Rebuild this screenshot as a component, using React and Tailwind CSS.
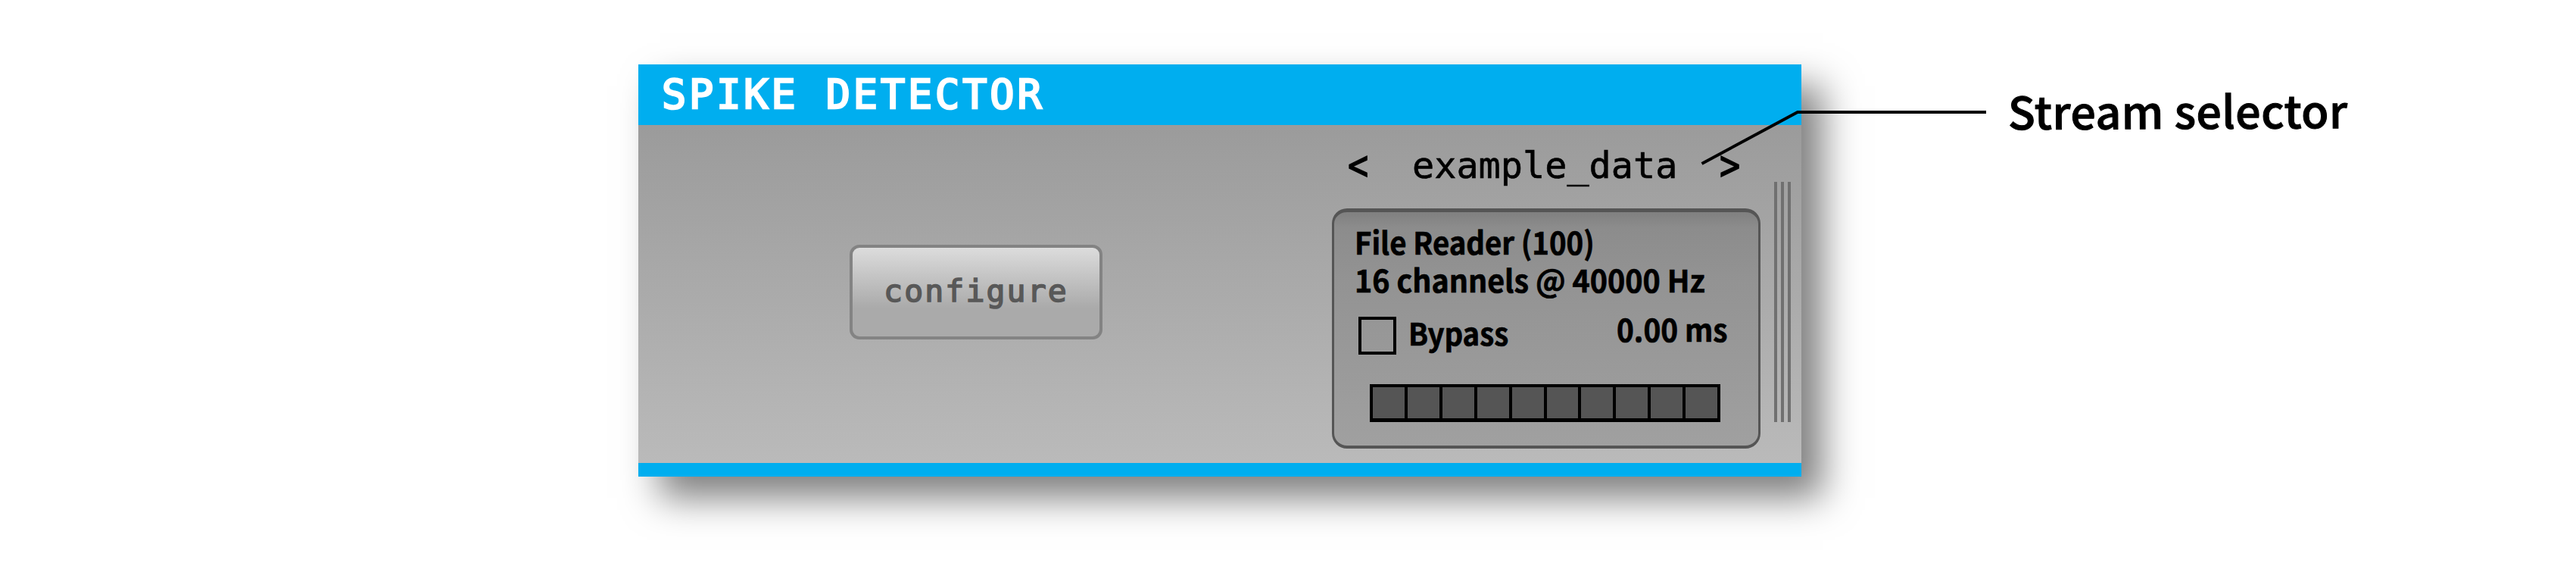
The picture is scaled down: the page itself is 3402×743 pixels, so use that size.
import React from "react";

function Meter() {
  return (
    <div className="ml-[15px] mt-[38px] flex h-[50px] w-[463px] gap-1 border-4 border-b-[5px] border-black bg-black">
      {Array.from({ length: 10 }, (_, i) => (
        <div key={i} className="flex-1 bg-[#555555]" />
      ))}
    </div>
  );
}

function StreamInfo() {
  return (
    <div className="mt-[13px] h-[317px] w-[566px] rounded-[20px] border-x-[3px] border-t-[5px] border-b-[4px] border-[#555555] bg-[linear-gradient(to_bottom,#808080_0px,#8c8c8c_20px,#939393_90px,#a0a0a0_100%)] pl-[32px] font-['Noto_Sans_CJK_SC',sans-serif] text-[41px] font-bold text-black [-webkit-text-stroke:0.7px_black]">
      <div className="-ml-[5px] h-[122px] pt-[13px] leading-[50px]">
        <div className="w-max origin-left scale-x-[0.936] whitespace-nowrap">File Reader (100)</div>
        <div className="w-max origin-left scale-x-[0.961] whitespace-nowrap">16 channels @ 40000 Hz</div>
      </div>
      <div className="mt-[16px] flex h-[51px] items-start">
        <div className="h-[50px] w-[50px] border-4 border-black" />
        <div className="ml-[16px] mt-[-5px] w-[275px] leading-[50px]">
          <div className="w-max origin-left scale-x-[0.935] whitespace-nowrap">Bypass</div>
        </div>
        <div className="mt-[-10px] w-max origin-left scale-x-[0.945] whitespace-nowrap leading-[50px]">0.00 ms</div>
      </div>
      <Meter />
    </div>
  );
}

function StreamSelector() {
  return (
    <div className="w-[567px] shrink-0">
      <div className="flex h-[97px] items-start pl-[20px] pt-[28px] font-['DejaVu_Sans_Mono',monospace] text-[48.5px] leading-[50px] text-black [-webkit-text-stroke:0.6px_black]">
        <span className="w-[86px] origin-[15px_60%] scale-x-[0.93] scale-y-[1.13] [-webkit-text-stroke:1.3px_black]">&lt;</span>
        <span className="w-[405px] whitespace-nowrap">example_data</span>
        <span className="origin-[15px_60%] scale-x-[0.93] scale-y-[1.13] [-webkit-text-stroke:1.3px_black]">&gt;</span>
      </div>
      <StreamInfo />
    </div>
  );
}

function Grip() {
  return (
    <div className="ml-[17px] mt-[75px] flex h-[317px] gap-[5px]">
      <div className="w-1 bg-[#707070]" />
      <div className="w-1 bg-[#707070]" />
      <div className="w-1 bg-[#707070]" />
    </div>
  );
}

export default function App() {
  return (
    <div className="relative flex h-[743px] w-[3402px] items-start overflow-hidden bg-white pl-[843px] pt-[85px]">
      <section className="h-[544px] w-[1536px] shrink-0 bg-[#00aeef] shadow-[28px_28px_46px_rgba(0,0,0,0.5)]">
        <header className="flex h-[80px] items-center pl-[31px] font-['DejaVu_Sans_Mono',monospace] text-[53.5px] leading-[80px] tracking-[3.9px] text-white [-webkit-text-stroke:2.6px_white]">
          <h1 className="whitespace-pre">SPIKE DETECTOR</h1>
        </header>
        <div className="flex h-[446px] items-start bg-linear-to-b from-[#9b9b9b] to-[#bababa]">
          <div className="flex w-[916px] shrink-0 pl-[279px] pt-[158px]">
            <button className="h-[125px] w-[334px] rounded-[13px] border-4 border-[#838383] bg-[linear-gradient(to_bottom,#dcdcdc_0%,#aaaaaa_68%,#aaaaaa_100%)] pb-[3px] font-['DejaVu_Sans_Mono',monospace] text-[41.5px] tracking-[2.1px] text-[#585858] [-webkit-text-stroke:1.6px_#585858]">
              configure
            </button>
          </div>
          <StreamSelector />
          <Grip />
        </div>
      </section>
      <div className="ml-[273px] mt-[21px] w-max origin-left -rotate-[0.25deg] whitespace-nowrap font-['Noto_Sans_CJK_SC',sans-serif] text-[59px] font-medium leading-[80px] tracking-[0.45px] text-black [-webkit-text-stroke:1px_black]">
        Stream selector
      </div>
      <svg className="absolute left-[2240px] top-[140px]" width="390" height="84" fill="none">
        <path d="M7.5 76 134 8H383" stroke="#000" strokeWidth="4" />
      </svg>
    </div>
  );
}
